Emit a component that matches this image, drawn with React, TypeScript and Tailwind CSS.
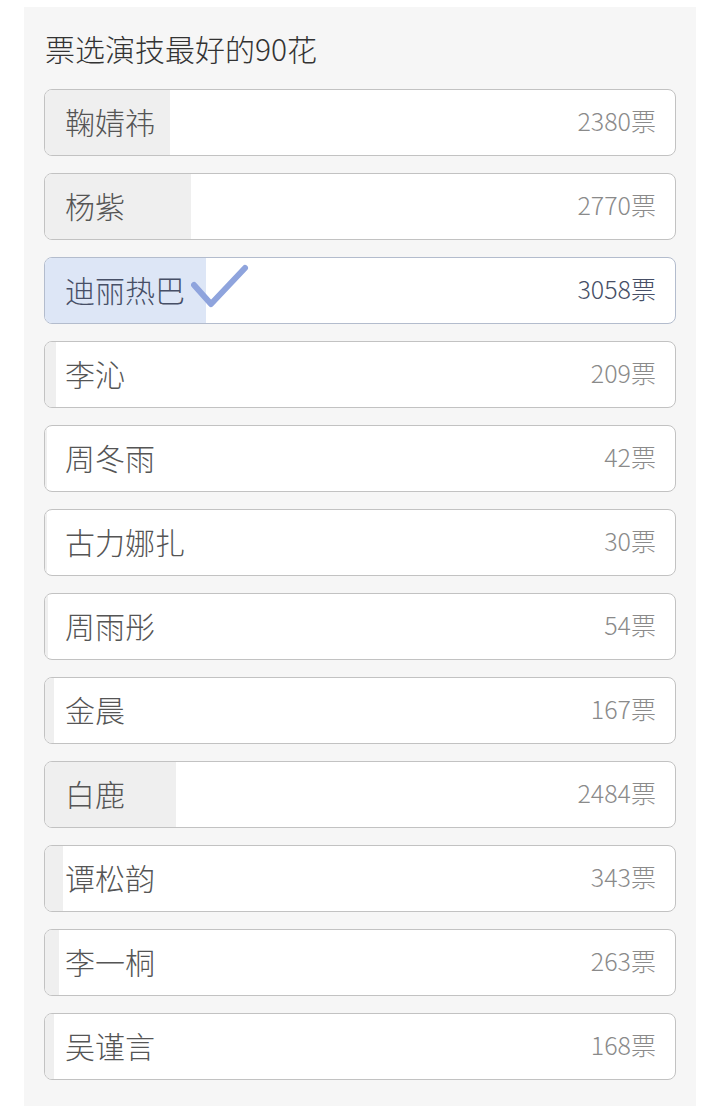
import React from 'react';

const options = [
  { name: '鞠婧祎', votes: 2380 },
  { name: '杨紫', votes: 2770 },
  { name: '迪丽热巴', votes: 3058, picked: true },
  { name: '李沁', votes: 209 },
  { name: '周冬雨', votes: 42 },
  { name: '古力娜扎', votes: 30 },
  { name: '周雨彤', votes: 54 },
  { name: '金晨', votes: 167 },
  { name: '白鹿', votes: 2484 },
  { name: '谭松韵', votes: 343 },
  { name: '李一桐', votes: 263 },
  { name: '吴谨言', votes: 168 },
];

const total = options.reduce((s, o) => s + o.votes, 0);

function Check() {
  return (
    <svg width="58" height="46" viewBox="0 0 58 46" className="ml-[6px] mt-[-4px]">
      <path d="M3 21 L20 40 L54 4" fill="none" stroke="#8fa4dd" strokeWidth="6" strokeLinecap="round" strokeLinejoin="round" />
    </svg>
  );
}

export default function App() {
  return (
    <div className="w-[720px] h-[1106px] bg-white overflow-hidden" style={{ fontFamily: '"Noto Sans CJK SC", "Noto Sans", sans-serif' }}>
      <div className="mx-[24px] mt-[7px] h-[1099px] bg-[#f6f6f6] px-[20px] pt-[23px]">
        <h1 className="text-[30px] leading-[36px] font-light text-[#333333] mb-[23px] ml-[1px]">票选演技最好的90花</h1>
        <div className="flex flex-col gap-[17px]">
          {options.map((o) => (
            <div
              key={o.name}
              className={`relative h-[67px] rounded-[8px] border overflow-hidden bg-white ${o.picked ? 'border-[#b3bccd]' : 'border-[#c2c2c2]'}`}
            >
              <div
                className={`absolute left-0 top-0 bottom-0 ${o.picked ? 'bg-[#dde6f6]' : 'bg-[#efefef]'}`}
                style={{ width: `${(o.votes / total) * 100}%` }}
              />
              <div className="relative flex h-full items-center justify-between pl-[20px] pr-[19px] pb-[4px]">
                <div className="flex items-center">
                  <span className={`text-[30px] leading-none font-light ${o.picked ? 'text-[#474f66]' : 'text-[#555555]'}`}>{o.name}</span>
                  {o.picked && <Check />}
                </div>
                <span className={`text-[25px] leading-none font-light ${o.picked ? 'text-[#474f66]' : 'text-[#8a8a8a]'}`}>{o.votes}票</span>
              </div>
            </div>
          ))}
        </div>
      </div>
    </div>
  );
}
